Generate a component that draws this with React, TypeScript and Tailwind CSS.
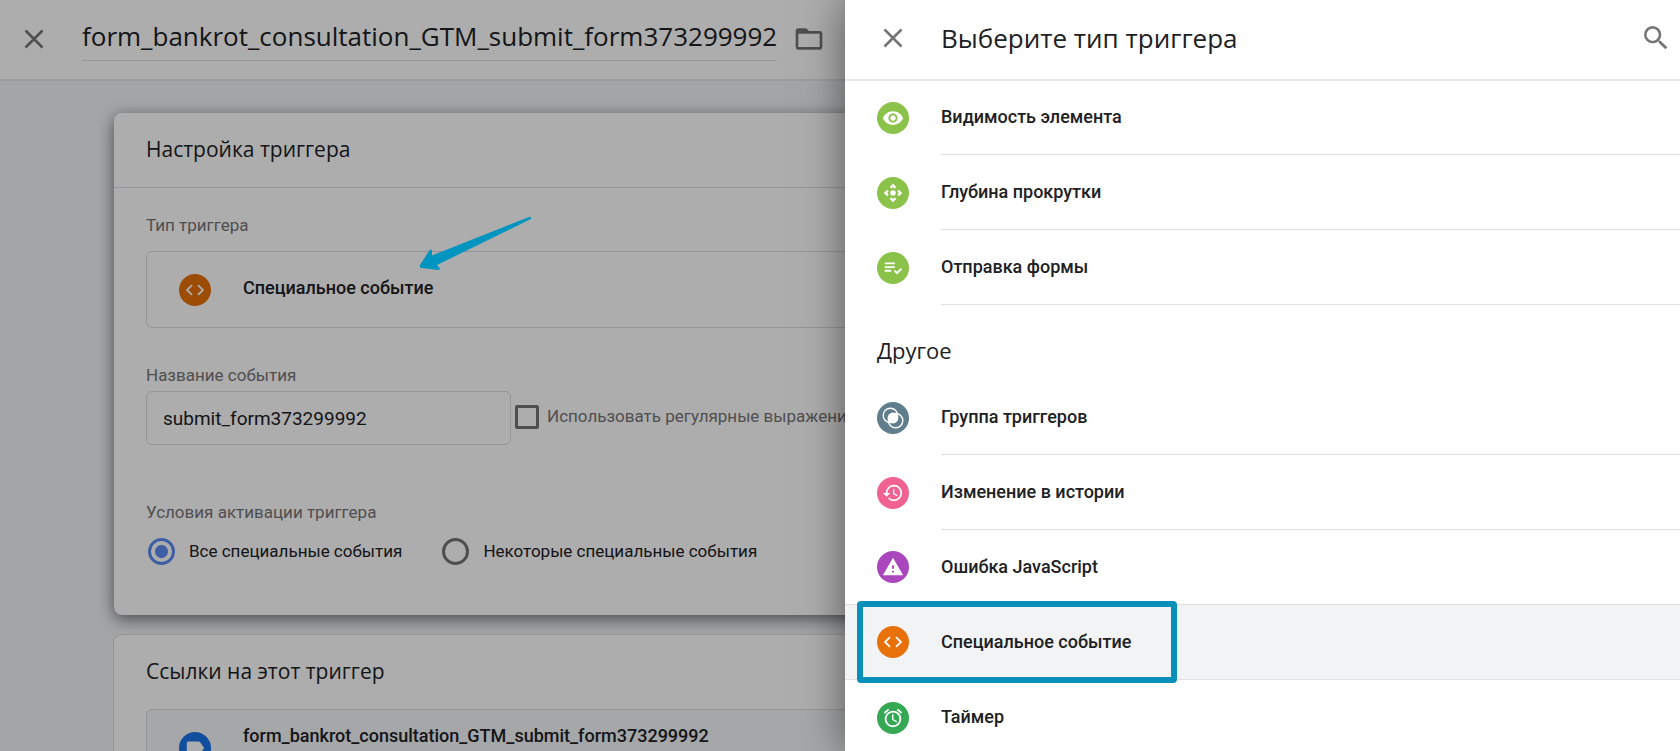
import { useState } from "react";
import type { ReactNode } from "react";
import {
  MdAlarm,
  MdCode,
  MdControlCamera,
  MdFolderOpen,
  MdHistory,
  MdLabel,
  MdPlaylistAddCheck,
  MdSearch,
  MdVisibility,
  MdWarning,
} from "react-icons/md";

interface TriggerType {
  name: string;
  color: string;
  icon: ReactNode;
}

const TRIGGER_NAME = "form_bankrot_consultation_GTM_submit_form373299992";

const userTriggers: TriggerType[] = [
  { name: "Видимость элемента", color: "bg-[#8bc34a]", icon: <MdVisibility size={22} /> },
  { name: "Глубина прокрутки", color: "bg-[#8bc34a]", icon: <MdControlCamera size={22} /> },
  { name: "Отправка формы", color: "bg-[#8bc34a]", icon: <MdPlaylistAddCheck size={22} /> },
];

const otherTriggers: TriggerType[] = [
  { name: "Группа триггеров", color: "bg-[#607d8b]", icon: <GroupIcon /> },
  { name: "Изменение в истории", color: "bg-[#f06292]", icon: <MdHistory size={22} /> },
  { name: "Ошибка JavaScript", color: "bg-[#ab47bc]", icon: <MdWarning size={22} /> },
  { name: "Специальное событие", color: "bg-[#e8710a]", icon: <MdCode size={22} /> },
  { name: "Таймер", color: "bg-[#34a853]", icon: <MdAlarm size={22} /> },
];

function CloseIcon() {
  return (
    <svg width="20" height="20" viewBox="0 0 20 20" fill="none" stroke="#757575" strokeWidth="2.6">
      <path d="M1.500 1.500l17 17M18.500 1.500l-17 17" />
    </svg>
  );
}

function GroupIcon() {
  return (
    <svg width="22" height="22" viewBox="0 0 22 22" fill="none" stroke="white" strokeWidth="1.4">
      <circle cx="8.4" cy="8.4" r="7.2" />
      <circle cx="13.6" cy="13.6" r="7.2" />
      <circle cx="11" cy="11" r="5.4" fill="white" stroke="none" />
    </svg>
  );
}

function Badge({ color, children }: { color: string; children: ReactNode }) {
  return (
    <span className={`flex size-8 shrink-0 items-center justify-center rounded-full text-white ${color}`}>
      {children}
    </span>
  );
}

function TriggerRow({
  trigger,
  selected,
  beforeSelected,
}: {
  trigger: TriggerType;
  selected: boolean;
  beforeSelected: boolean;
}) {
  // the line runs the full width around the selected row and is inset everywhere else
  const fullLine = selected || beforeSelected;

  return (
    <li className={`relative ${selected ? "bg-[#f1f3f4]" : ""} ${fullLine ? "border-b border-[#e0e0e0]" : ""}`}>
      <button type="button" className="flex w-full items-center gap-8 pl-8 text-left">
        <Badge color={trigger.color}>{trigger.icon}</Badge>
        <span
          className={`flex-1 text-lg leading-[74px] font-medium ${
            fullLine ? "h-[74px]" : "h-[75px] border-b border-[#e0e0e0]"
          }`}
        >
          {trigger.name}
        </span>
      </button>
      {selected && (
        <div className="pointer-events-none absolute -top-1 left-3 h-[82px] w-80 rounded-sm border-6 border-[#0890b8]" />
      )}
    </li>
  );
}

function TriggerList({ items, selected }: { items: TriggerType[]; selected: string }) {
  return (
    <ul className="-mt-px">
      {items.map((item, i) => (
        <TriggerRow
          key={item.name}
          trigger={item}
          selected={item.name === selected}
          beforeSelected={items[i + 1]?.name === selected}
        />
      ))}
    </ul>
  );
}

function Radio({ label, checked, onChange }: { label: string; checked: boolean; onChange: () => void }) {
  return (
    <label className="flex items-center gap-3.5">
      <input
        type="radio"
        name="fire"
        checked={checked}
        onChange={onChange}
        className="size-[27px] appearance-none rounded-full border-3 border-[#757575] checked:border-[#5c8df0] checked:bg-[radial-gradient(circle,#5c8df0_6px,transparent_7px)]"
      />
      <span className="pb-0.5 text-[17px] leading-6">{label}</span>
    </label>
  );
}

function Editor() {
  const [name, setName] = useState(TRIGGER_NAME);
  const [eventName, setEventName] = useState("submit_form373299992");
  const [fireOn, setFireOn] = useState("all");

  return (
    <div className="min-h-screen bg-[#f1f3f6]">
      <header className="flex h-[81px] items-center border-b-2 border-[#e8e8e8] bg-white pb-0.5 pl-6">
        <button type="button" aria-label="Закрыть">
          <CloseIcon />
        </button>
        <input
          aria-label="Название триггера"
          value={name}
          onChange={(e) => setName(e.target.value)}
          className="ml-[38px] h-11 w-[695px] border-b border-[#dadce0] pb-1 font-['Open_Sans',sans-serif] text-[26px] outline-none"
        />
        <button type="button" aria-label="Папка" className="ml-4 text-[#757575]">
          <MdFolderOpen size={32} />
        </button>
      </header>

      <main className="flex flex-col gap-5 py-8 pr-8 pl-[114px]">
        <section className="rounded-lg bg-white shadow-[0_4px_16px_rgba(0,0,0,0.55)]">
          <h2 className="border-b border-[#dadce0] px-8 pt-5 pb-[22px] font-['Open_Sans',sans-serif] text-[21px] leading-8">
            Настройка триггера
          </h2>
          <div className="px-8 pt-[25px] pb-[50px] text-[17px]">
            <p className="leading-6 text-[#757575]">Тип триггера</p>
            <button
              type="button"
              className="mt-3.5 flex h-[77px] w-full items-center gap-8 rounded-md border border-[#dadce0] px-8 text-left"
            >
              <Badge color="bg-[#e8710a]">
                <MdCode size={22} />
              </Badge>
              <span className="pb-1 text-lg font-medium">Специальное событие</span>
            </button>

            <label htmlFor="event" className="mt-[35px] block leading-6 text-[#757575]">
              Название события
            </label>
            <div className="mt-1 flex items-center">
              <input
                id="event"
                value={eventName}
                onChange={(e) => setEventName(e.target.value)}
                className="h-[54px] w-[365px] rounded-md border border-[#dadce0] px-4 text-[19px] outline-none"
              />
              <label className="ml-1 flex items-center gap-2 pb-0.5 text-[#757575]">
                <input type="checkbox" className="size-6 appearance-none rounded-xs border-3 border-[#757575]" />
                Использовать регулярные выражения
              </label>
            </div>

            <p className="mt-[55px] leading-6 text-[#757575]">Условия активации триггера</p>
            <div className="mt-3.5 ml-0.5 flex gap-10">
              <Radio label="Все специальные события" checked={fireOn === "all"} onChange={() => setFireOn("all")} />
              <Radio
                label="Некоторые специальные события"
                checked={fireOn === "some"}
                onChange={() => setFireOn("some")}
              />
            </div>
          </div>
        </section>

        <section className="rounded-lg bg-white px-8 pb-8 ring-1 ring-[#dadce0]">
          <h2 className="pt-5 pb-[22px] font-['Open_Sans',sans-serif] text-[21px] leading-8">Ссылки на этот триггер</h2>
          <a
            href="#tag"
            className="flex items-start gap-8 rounded-md border border-[#dadce0] bg-[#f3f6f9] px-8 pt-3 pb-6"
          >
            <span className="mt-2.5">
              <Badge color="bg-[#1a73e8]">
                <MdLabel size={22} />
              </Badge>
            </span>
            <span className="text-lg font-medium">{TRIGGER_NAME}</span>
          </a>
        </section>
      </main>
    </div>
  );
}

export default function App() {
  return (
    <div className="relative h-screen overflow-hidden font-[Roboto,sans-serif] text-base text-[#202124]">
      <Editor />
      <div className="absolute inset-0 bg-black/32" />

      <svg className="absolute top-[215px] left-[418px]" width="116" height="58" viewBox="0 0 116 58" fill="#0094c0">
        <path d="M2 50L12 34.500Q14 34 14 36V40.500L111 2Q114 1.500 113 4L19 50L22 53.500Q22 55 20 55L3 53Q1 52 2 50Z" />
      </svg>

      <aside className="absolute inset-y-0 right-0 w-[calc(50%-5px)] overflow-hidden bg-white shadow-[0_0_40px_rgba(0,0,0,0.5)]">
        <header className="flex h-[81px] items-center border-b-2 border-[#e8e8e8] pr-2 pb-1 pl-[38px]">
          <button type="button" aria-label="Закрыть">
            <CloseIcon />
          </button>
          <h1 className="ml-[38px] flex-1 pt-0.5 font-['Open_Sans',sans-serif] text-[26px]">Выберите тип триггера</h1>
          <button type="button" aria-label="Поиск" className="text-[#757575]">
            <MdSearch size={32} />
          </button>
        </header>
        <TriggerList items={userTriggers} selected="Специальное событие" />
        <h2 className="h-[76px] px-8 pt-7 font-['Open_Sans',sans-serif] text-[22px] leading-[34px]">Другое</h2>
        <TriggerList items={otherTriggers} selected="Специальное событие" />
      </aside>
    </div>
  );
}
